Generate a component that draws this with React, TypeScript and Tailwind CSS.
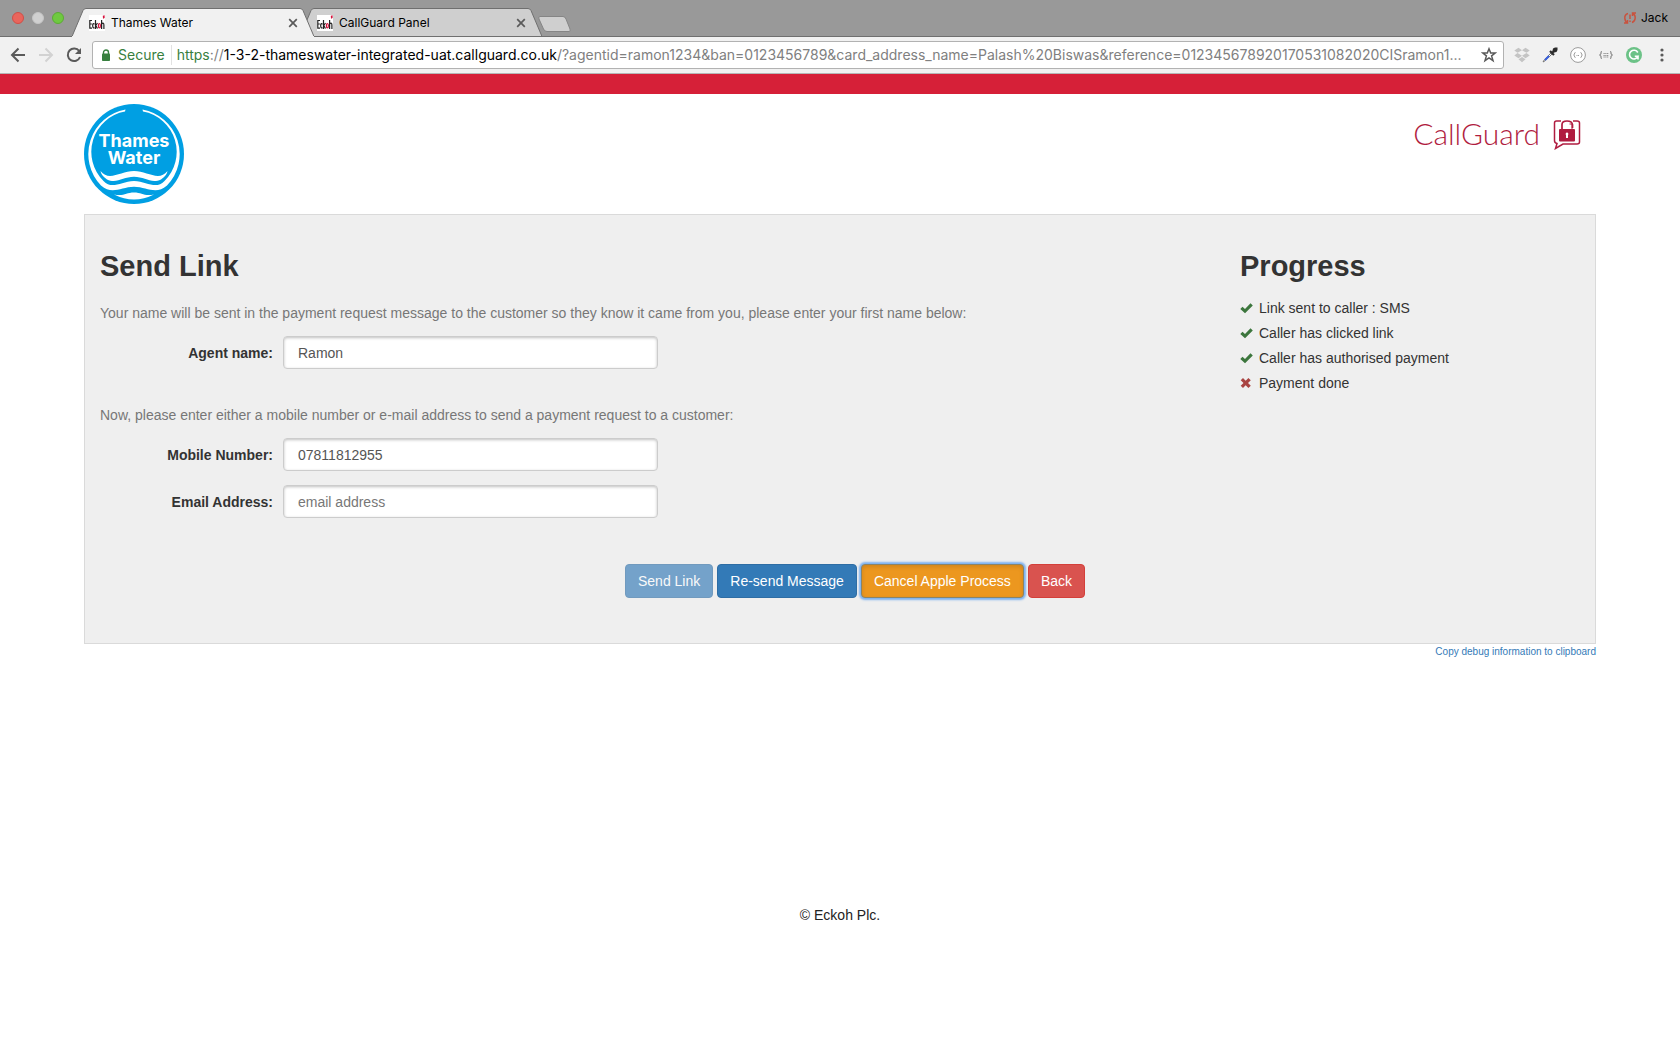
import { useState } from "react";

function Favicon() {
  return (
    <svg viewBox="0 0 16 16" className="h-4 w-4 shrink-0" aria-hidden="true">
      <rect width="16" height="16" fill="#fff" />
      <g fill="none" stroke="#222" strokeWidth="1.2">
        <path d="M3 5.5H.8V13.200H3M.8 9H2.800" />
        <path d="M5.500 9.200Q3.700 7.500 3.700 10.500T5.500 12.600" />
        <path d="M6.500 5V14M8.500 8L6.800 10.500L8.500 13.500" />
        <path d="M12.600 5V14M12.600 9Q14.900 7 14.900 10V14" />
      </g>
      <ellipse cx="10.400" cy="10.700" rx="1" ry="2.200" fill="none" stroke="#d4123c" strokeWidth="1.200" />
      <path d="M13.800 .8L15.600 .2V3L14 3.800Z" fill="#d4123c" />
    </svg>
  );
}

function CloseGlyph() {
  return (
    <svg viewBox="0 0 10 10" className="h-[10px] w-[10px]" aria-hidden="true">
      <path d="M1.200 1.200L8.800 8.800M8.800 1.200L1.200 8.800" stroke="#5a5a5a" strokeWidth="1.700" />
    </svg>
  );
}

function Tab({ title, active }: { title: string; active?: boolean }) {
  return (
    <div className={`relative flex h-[29px] w-[242px] items-center ${active ? "z-10" : "-ml-[14px]"}`}>
      <svg viewBox="0 0 242 29" preserveAspectRatio="none" className="absolute inset-0 h-full w-full" aria-hidden="true">
        <path
          d="M0 28.500L11 2.500Q12 .5 14 .5H228Q230 .5 231 2.500L242 28.500"
          fill={active ? "#f1f1f1" : "#cfcfcf"}
          stroke="#6f6f6f"
        />
        <path d="M0 28.500H242" stroke={active ? "#f1f1f1" : "#6f6f6f"} />
      </svg>
      <div className="relative flex w-full items-center pr-[13px] pl-[17px]">
        <Favicon />
        <span className="ml-[6px] flex-1 text-[12px] leading-4 text-black">{title}</span>
        <button type="button" aria-label={`Close ${title}`} className="flex h-4 w-4 items-center justify-center">
          <CloseGlyph />
        </button>
      </div>
    </div>
  );
}

function TabStrip() {
  return (
    <div className="flex h-[37px] items-end border-b border-[#6f6f6f] bg-[#999999]">
      <div className="flex h-[37px] items-center gap-2 pr-2 pl-3">
        <button type="button" aria-label="Close window" className="h-3 w-3 rounded-full border border-[#cf4f47] bg-[#e9655c]" />
        <button type="button" aria-label="Minimise window" className="h-3 w-3 rounded-full border border-[#c4c4c4] bg-[#d0d0d0]" />
        <button type="button" aria-label="Zoom window" className="h-3 w-3 rounded-full border border-[#5cab35] bg-[#6fc940]" />
      </div>
      <div className="-mb-px flex">
        <Tab title="Thames Water" active />
        <Tab title="CallGuard Panel" />
      </div>
      <button type="button" aria-label="New tab" className="mb-1 -ml-1 h-4 w-[34px]">
        <svg viewBox="0 0 34 16" className="h-4 w-[34px]" aria-hidden="true">
          <path d="M2 .5H25Q27 .5 28 3L32 13Q33 15.500 31 15.500H9Q6.500 15.500 5.500 13L1 3Q0 .5 2 .5Z" fill="#cfcfcf" stroke="#858585" />
        </svg>
      </button>
      <div className="mr-3 ml-auto flex h-[37px] items-center gap-1">
        <svg viewBox="0 0 14 14" className="h-[14px] w-[14px]" fill="none" stroke="#c9523e" strokeWidth="1.500" aria-hidden="true">
          <path d="M5 2.500Q1.500 3.500 1.800 7.200T5 12M1 12H4.500V9M9 2Q12.400 3.500 12.200 7T9 11.500M13 2H9.500V5" />
          <path d="M7 3.500V8M7 9.500V11" />
        </svg>
        <span className="text-[12px] leading-4 text-black">Jack</span>
      </div>
    </div>
  );
}

function Toolbar() {
  return (
    <div className="flex h-[37px] items-center border-b border-[#b6b6b6] bg-[#f1f1f1] pr-[10px] pl-[10px]">
      <button type="button" aria-label="Back to previous page">
        <svg viewBox="0 0 16 16" className="h-4 w-4" fill="none" stroke="#5a5a5a" strokeWidth="2" aria-hidden="true">
          <path d="M15 8H2M8.500 1.500L2 8L8.500 14.500" />
        </svg>
      </button>
      <button type="button" aria-label="Forward" className="ml-3">
        <svg viewBox="0 0 16 16" className="h-4 w-4" fill="none" stroke="#d2d2d2" strokeWidth="2" aria-hidden="true">
          <path d="M1 8H14M7.500 1.500L14 8L7.500 14.500" />
        </svg>
      </button>
      <button type="button" aria-label="Reload" className="ml-3">
        <svg viewBox="0 0 16 16" className="h-4 w-4" aria-hidden="true">
          <path d="M13.200 4A6.300 6.300 0 1 0 14 10" fill="none" stroke="#5a5a5a" strokeWidth="2" />
          <path d="M15 1V7H9Z" fill="#5a5a5a" />
        </svg>
      </button>
      <div className="ml-[10px] flex h-7 min-w-0 flex-1 items-center rounded-[3px] border border-[#b2b2b2] bg-white pr-[6px] pl-2">
        <svg viewBox="0 0 10 12" className="h-3 w-[10px] shrink-0" aria-hidden="true">
          <path d="M2.500 5V3.500A2.500 2.500 0 0 1 7.500 3.500V5" fill="none" stroke="#38803f" strokeWidth="1.400" />
          <rect x="1" y="4.500" width="8" height="7.500" rx=".8" fill="#38803f" />
        </svg>
        <span className="ml-[7px] text-[14px] leading-5 text-[#38803f]">Secure</span>
        <span className="mr-[5px] ml-[6px] h-5 w-px bg-[#e2e2e2]" />
        <p className="min-w-0 flex-1 truncate text-[14px] leading-5 text-[#808080]">
          <span className="text-[#38803f]">https</span>://
          <span className="text-black">1-3-2-thameswater-integrated-uat.callguard.co.uk</span>
          /?agentid=ramon1234&amp;ban=0123456789&amp;card_address_name=Palash%20Biswas&amp;reference=012345678920170531082020CISramon1...
        </p>
        <button type="button" aria-label="Bookmark this page" className="ml-2">
          <svg viewBox="0 0 16 16" className="h-4 w-4" fill="none" stroke="#5a5a5a" strokeWidth="1.500" aria-hidden="true">
            <path d="M8 1.800L9.700 6H14.300L10.600 8.900L12 13.600L8 10.800L4 13.600L5.400 8.900L1.700 6H6.300Z" />
          </svg>
        </button>
      </div>
      <div className="ml-[10px] flex items-center gap-3">
        <button type="button" aria-label="Dropbox">
          <svg viewBox="0 0 16 16" className="h-4 w-4" fill="#c4c4c4" aria-hidden="true">
            <path d="M4.500 .8L8 3.200L3.500 5.800L.3 3.400ZM11.500 .8L15.700 3.400L12.500 5.800L8 3.200ZM.3 8.500L3.500 6L8 8.700L4.500 11.200ZM12.500 6L15.700 8.500L11.500 11.200L8 8.700ZM8 9.900L11.500 12.300L8 15.200L4.500 12.300Z" />
          </svg>
        </button>
        <button type="button" aria-label="Colour picker">
          <svg viewBox="0 0 16 16" className="h-4 w-4" aria-hidden="true">
            <path d="M9 6L2.500 12.500L1 15L3.500 13.500L10 7" fill="#fff" stroke="#777" />
            <path d="M7 9L3 13" stroke="#3b62e0" strokeWidth="2" />
            <path d="M8 4L12 8M9.500 6.500L13.800 2.200" stroke="#2b2b2b" strokeWidth="2.200" />
            <path d="M11 1.500L13 .5H15.500V3L14.500 5L12 5.500L10.500 4Z" fill="#2b2b2b" />
          </svg>
        </button>
        <button type="button" aria-label="JSON viewer">
          <svg viewBox="0 0 16 16" className="h-4 w-4" fill="none" stroke="#9a9a9a" aria-hidden="true">
            <circle cx="8" cy="8" r="7.400" fill="#fff" />
            <path d="M5.500 5.500Q4.300 5.500 4.500 7L3.700 8L4.500 9Q4.300 10.500 5.500 10.500M10.500 5.500Q11.700 5.500 11.500 7L12.300 8L11.500 9Q11.700 10.500 10.500 10.500" />
            <path d="M6.500 8.500H9.500" strokeDasharray="1 .5" />
          </svg>
        </button>
        <button type="button" aria-label="JSON formatter">
          <svg viewBox="0 0 16 16" className="h-4 w-4" fill="none" stroke="#8a8a8a" aria-hidden="true">
            <path d="M4 4.500Q2.800 4.500 3 6.500L1.800 8L3 9.500Q2.800 11.500 4 11.500M12 4.500Q13.200 4.500 13 6.500L14.200 8L13 9.500Q13.200 11.500 12 11.500" strokeWidth="1.200" />
            <path d="M5.500 6.500H10.500M5.500 8.500H10.500M5.500 10H10.500" strokeDasharray="1.200 .6" />
          </svg>
        </button>
        <button type="button" aria-label="Grammarly">
          <svg viewBox="0 0 16 16" className="h-4 w-4" aria-hidden="true">
            <circle cx="8" cy="8" r="8" fill="#6cc287" />
            <path d="M11.800 5.500A4.400 4.400 0 1 0 12 9.300H8.800M12 9V12.500" fill="none" stroke="#fff" strokeWidth="1.600" />
          </svg>
        </button>
        <button type="button" aria-label="Menu">
          <svg viewBox="0 0 16 16" className="h-4 w-4" fill="#5a5a5a" aria-hidden="true">
            <circle cx="8" cy="3" r="1.600" />
            <circle cx="8" cy="8" r="1.600" />
            <circle cx="8" cy="13" r="1.600" />
          </svg>
        </button>
      </div>
    </div>
  );
}

function ThamesWaterLogo() {
  return (
    <svg viewBox="0 0 100 100" className="h-[100px] w-[100px]" role="img" aria-label="Thames Water">
      <circle cx="50" cy="50" r="50" fill="#009fe3" />
      <path d="M41.500 5.500A45.300 45.300 0 0 0 17 81.500C28 91 37 83 50 82.700C63 83 72 91 83 81.500A45.300 45.300 0 0 0 58.500 5.500L59 7.500A41 41 0 0 1 80.500 77C72 86 63 77.500 50 77C37 77.500 28 86 19.500 77A41 41 0 0 1 41 7.500Z" fill="#fff" />
      <path d="M16.500 67C25 78 37 67 50 67S75 78 83.500 67Q83 71.500 77 75.500C67 80 61 72.800 50 72.800S33 80 23 75.500Q17 71.500 16.500 67Z" fill="#fff" />
      <path d="M30 90.500C40 92.500 42 88.500 50 88.500S60 92.500 70 90.500Q60 95.500 50 95.500T30 90.500Z" fill="#fff" />
      <g fill="#fff" fontFamily="Inter, sans-serif" fontWeight="700" fontSize="18" textAnchor="middle">
        <text x="50" y="43">Thames</text>
        <text x="50" y="60">Water</text>
      </g>
    </svg>
  );
}

function CallGuardLogo() {
  return (
    <div className="mt-[11px] mr-[15px] flex items-center text-[#b01c40]">
      <span className="font-[Lato,sans-serif] text-[30px] leading-9 font-light">CallGuard</span>
      <svg viewBox="0 0 28 31" className="ml-[13px] mt-[2px] h-[31px] w-7" aria-hidden="true">
        <path d="M8 2H3.500Q1.500 2 1.500 4V21.500Q1.500 24 4 24.500L2.500 29.500L10 25H24Q26.500 25 26.500 23V4Q26.500 2 24 2H20" fill="none" stroke="currentColor" strokeWidth="1.500" />
        <path d="M9 11V5.500Q9 2 14 2T19.500 5.500V9" fill="none" stroke="currentColor" strokeWidth="1.700" />
        <path d="M16.500 5H19V10" fill="none" stroke="currentColor" />
        <rect x="6" y="10" width="16" height="12.500" rx="1" fill="currentColor" />
        <path d="M14 13.500A1.500 1.500 0 0 1 15 16V19H13V16A1.500 1.500 0 0 1 14 13.500Z" fill="#fff" />
      </svg>
    </div>
  );
}

type FieldProps = { id: string; label: string; value: string; placeholder?: string; onChange: (v: string) => void };

function Field({ id, label, value, placeholder, onChange }: FieldProps) {
  return (
    <div className="flex items-center">
      <label htmlFor={id} className="w-[173px] text-right font-bold text-[#333333]">
        {label}
      </label>
      <input
        id={id}
        value={value}
        placeholder={placeholder}
        onChange={(e) => onChange(e.target.value)}
        className="ml-[10px] h-[33px] w-[375px] rounded-[4px] border border-[#cccccc] bg-white px-[14px] text-[14px] text-[#555555] shadow-[inset_0_1px_3px_rgba(0,0,0,0.25)] outline-none placeholder:text-[#777777]"
      />
    </div>
  );
}

const STEPS = [
  { text: "Link sent to caller : SMS", done: true },
  { text: "Caller has clicked link", done: true },
  { text: "Caller has authorised payment", done: true },
  { text: "Payment done", done: false },
];

function StepIcon({ done }: { done: boolean }) {
  return (
    <svg viewBox="0 0 14 12" className="h-3 w-[14px] shrink-0" aria-hidden="true">
      {done ? (
        <path d="M.3 7L2.500 4.800L5 7L10.500 1.200L12.800 3.400L5 11.300Z" fill="#3c763d" />
      ) : (
        <path d="M3 1L5.700 3.700L8.400 1L10.800 3.200L8 6L10.800 8.800L8.400 11L5.700 8.300L3 11L.7 8.800L3.500 6L.7 3.200Z" fill="#a94442" />
      )}
    </svg>
  );
}

const BTN = "h-[34px] rounded-[4px] border px-3 text-[14px] text-white";

export default function App() {
  const [agent, setAgent] = useState("Ramon");
  const [mobile, setMobile] = useState("07811812955");
  const [email, setEmail] = useState("");

  return (
    <div className="min-h-screen bg-white font-['Liberation_Sans',Arial,sans-serif] text-[14px] leading-5 text-[#333333]">
      <div className="font-[Inter,sans-serif]">
        <TabStrip />
        <Toolbar />
      </div>
      <div className="h-5 bg-[#d62038]" />
      <header className="mx-[5%] flex items-start justify-between py-[10px]">
        <ThamesWaterLogo />
        <CallGuardLogo />
      </header>
      <main className="mx-[5%]">
        <div className="border border-[#dadada] bg-[#efefef] pb-[45px] pl-[15px]">
          <div className="flex">
            <section className="min-w-0 flex-1">
              <h2 className="mt-[34px] text-[29px] leading-[34px] font-bold">Send Link</h2>
              <p className="mt-5 text-[#777777]">
                Your name will be sent in the payment request message to the customer so they know it came from you, please enter your first name below:
              </p>
              <div className="mt-[13px]">
                <Field id="agent" label="Agent name:" value={agent} onChange={setAgent} />
              </div>
              <p className="mt-9 text-[#777777]">
                Now, please enter either a mobile number or e-mail address to send a payment request to a customer:
              </p>
              <div className="mt-[13px] flex flex-col gap-[14px]">
                <Field id="mobile" label="Mobile Number:" value={mobile} onChange={setMobile} />
                <Field id="email" label="Email Address:" value={email} placeholder="email address" onChange={setEmail} />
              </div>
            </section>
            <aside className="w-[355px] shrink-0">
              <h2 className="mt-[34px] text-[29px] leading-[34px] font-bold">Progress</h2>
              <ul className="mt-3">
                {STEPS.map((s) => (
                  <li key={s.text} className="flex h-[25px] items-center gap-[5px]">
                    <StepIcon done={s.done} />
                    <span>{s.text}</span>
                  </li>
                ))}
              </ul>
            </aside>
          </div>
          <div className="mt-[46px] flex justify-center gap-1 pl-[15px]">
            <button type="button" disabled className={`${BTN} border-[#2e6da4] bg-[#337ab7] opacity-65`}>Send Link</button>
            <button type="button" className={`${BTN} border-[#2e6da4] bg-[#337ab7]`}>Re-send Message</button>
            <button type="button" className={`${BTN} border-[#8a8468] bg-[#ec971f] shadow-[inset_0_2px_4px_rgba(0,0,0,0.125),0_0_2px_2px_#7db2f0]`}>Cancel Apple Process</button>
            <button type="button" className={`${BTN} border-[#d43f3a] bg-[#d9534f]`}>Back</button>
          </div>
        </div>
        <div className="flex justify-end">
          <a href="#debug" className="text-[10px] leading-4 text-[#337ab7]">Copy debug information to clipboard</a>
        </div>
      </main>
      <footer className="mt-[245px] text-center text-[#222222]">© Eckoh Plc.</footer>
    </div>
  );
}
